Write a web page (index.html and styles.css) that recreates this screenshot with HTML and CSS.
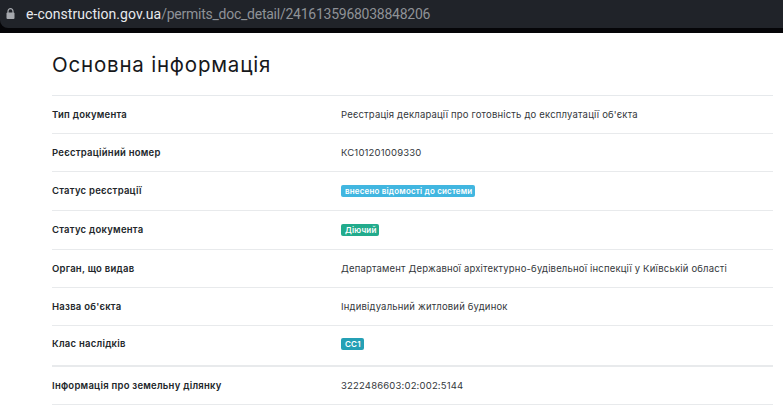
FILE: index.html
```html
<!DOCTYPE html>
<html lang="uk">
<head>
<meta charset="utf-8">
<title>Основна інформація</title>
<link rel="stylesheet" href="styles.css">
</head>
<body>
<header class="chrome">
  <div class="bar">
    <svg class="lock" width="9" height="11" viewBox="0 0 9 11"><path d="M2 5V3.2a2.5 2.5 0 0 1 5 0V5" fill="none" stroke="#a6a9ae" stroke-width="1.2"/><rect x="0.5" y="4.5" width="8" height="6.5" rx="1" fill="#a6a9ae"/></svg>
    <div class="url"><span class="host">e-construction.gov.ua</span><span class="path">/permits_doc_detail/2416135968038848206</span></div>
  </div>
</header>
<main class="content">
  <h1 class="title">Основна інформація</h1>
  <section class="table">
    <div class="row"><div class="label">Тип документа</div><div class="value">Реєстрація декларації про готовність до експлуатації об'єкта</div></div>
    <div class="row"><div class="label">Реєстраційний номер</div><div class="value">КС101201009330</div></div>
    <div class="row wide"><div class="label">Статус реєстрації</div><div class="value"><span class="badge blue">внесено відомості до системи</span></div></div>
    <div class="row wide"><div class="label">Статус документа</div><div class="value"><span class="badge green">Діючий</span></div></div>
    <div class="row"><div class="label">Орган, що видав</div><div class="value">Департамент Державної архітектурно-будівельної інспекції у Київській області</div></div>
    <div class="row"><div class="label">Назва об'єкта</div><div class="value">Індивідуальний житловий будинок</div></div>
    <div class="row tall"><div class="label">Клас наслідків</div><div class="value"><span class="badge teal">СС1</span></div></div>
    <div class="row"><div class="label">Інформація про земельну ділянку</div><div class="value">3222486603:02:002:5144</div></div>
  </section>
</main>
</body>
</html>
```
FILE: styles.css
```css
* { box-sizing: border-box; }
html, body { margin: 0; padding: 0; }
body {
  width: 783px;
  height: 411px;
  overflow: hidden;
  background: #fff;
  font-family: Inter, "Noto Sans", sans-serif;
  color: #212529;
}
.chrome { background: #050508; height: 33px; }
.bar {
  height: 28px;
  background: #202329;
  border-bottom-left-radius: 8px;
  display: flex;
  align-items: center;
  gap: 11px;
  padding-left: 6px;
}
.lock { flex: none; margin-top: -1px; }
.url {
  font-family: Roboto, "Liberation Sans", sans-serif;
  font-size: 14px;
  white-space: nowrap;
}
.host { color: #e8eaed; letter-spacing: 0.05px; }
.path { color: #8f9297; letter-spacing: -0.25px; }
.content { padding: 0 10px 0 52px; }
.title {
  margin: 0;
  height: 62px;
  padding-top: 18px;
  font-size: 20.5px;
  line-height: 27px;
  font-weight: 400;
  letter-spacing: 0.8px;
  color: #16181b;
}
.table { border-top: 1px solid #e6e9ec; }
.row {
  display: flex;
  align-items: center;
  height: 38px;
  border-bottom: 1px solid #e8eaec;
  font-size: 9.5px;
  line-height: 14px;
}
.wide { height: 39px; }
.tall { height: 41px; border-bottom-width: 2px; padding-bottom: 3px; }
.label { width: 289px; font-weight: 600; color: #22262a; letter-spacing: 0.25px; flex: none; }
.value { color: #33373b; letter-spacing: 0.18px; }
.badge {
  display: inline-block;
  padding: 0 3px 0 4px;
  height: 12px;
  line-height: 12px;
  border-radius: 2px;
  color: #fff;
  font-size: 8px;
  font-weight: 600;
  vertical-align: middle;
}
.blue { background: #41b6e0; }
.green { background: #22ab8c; }
.teal { background: #25a0b5; }
```
